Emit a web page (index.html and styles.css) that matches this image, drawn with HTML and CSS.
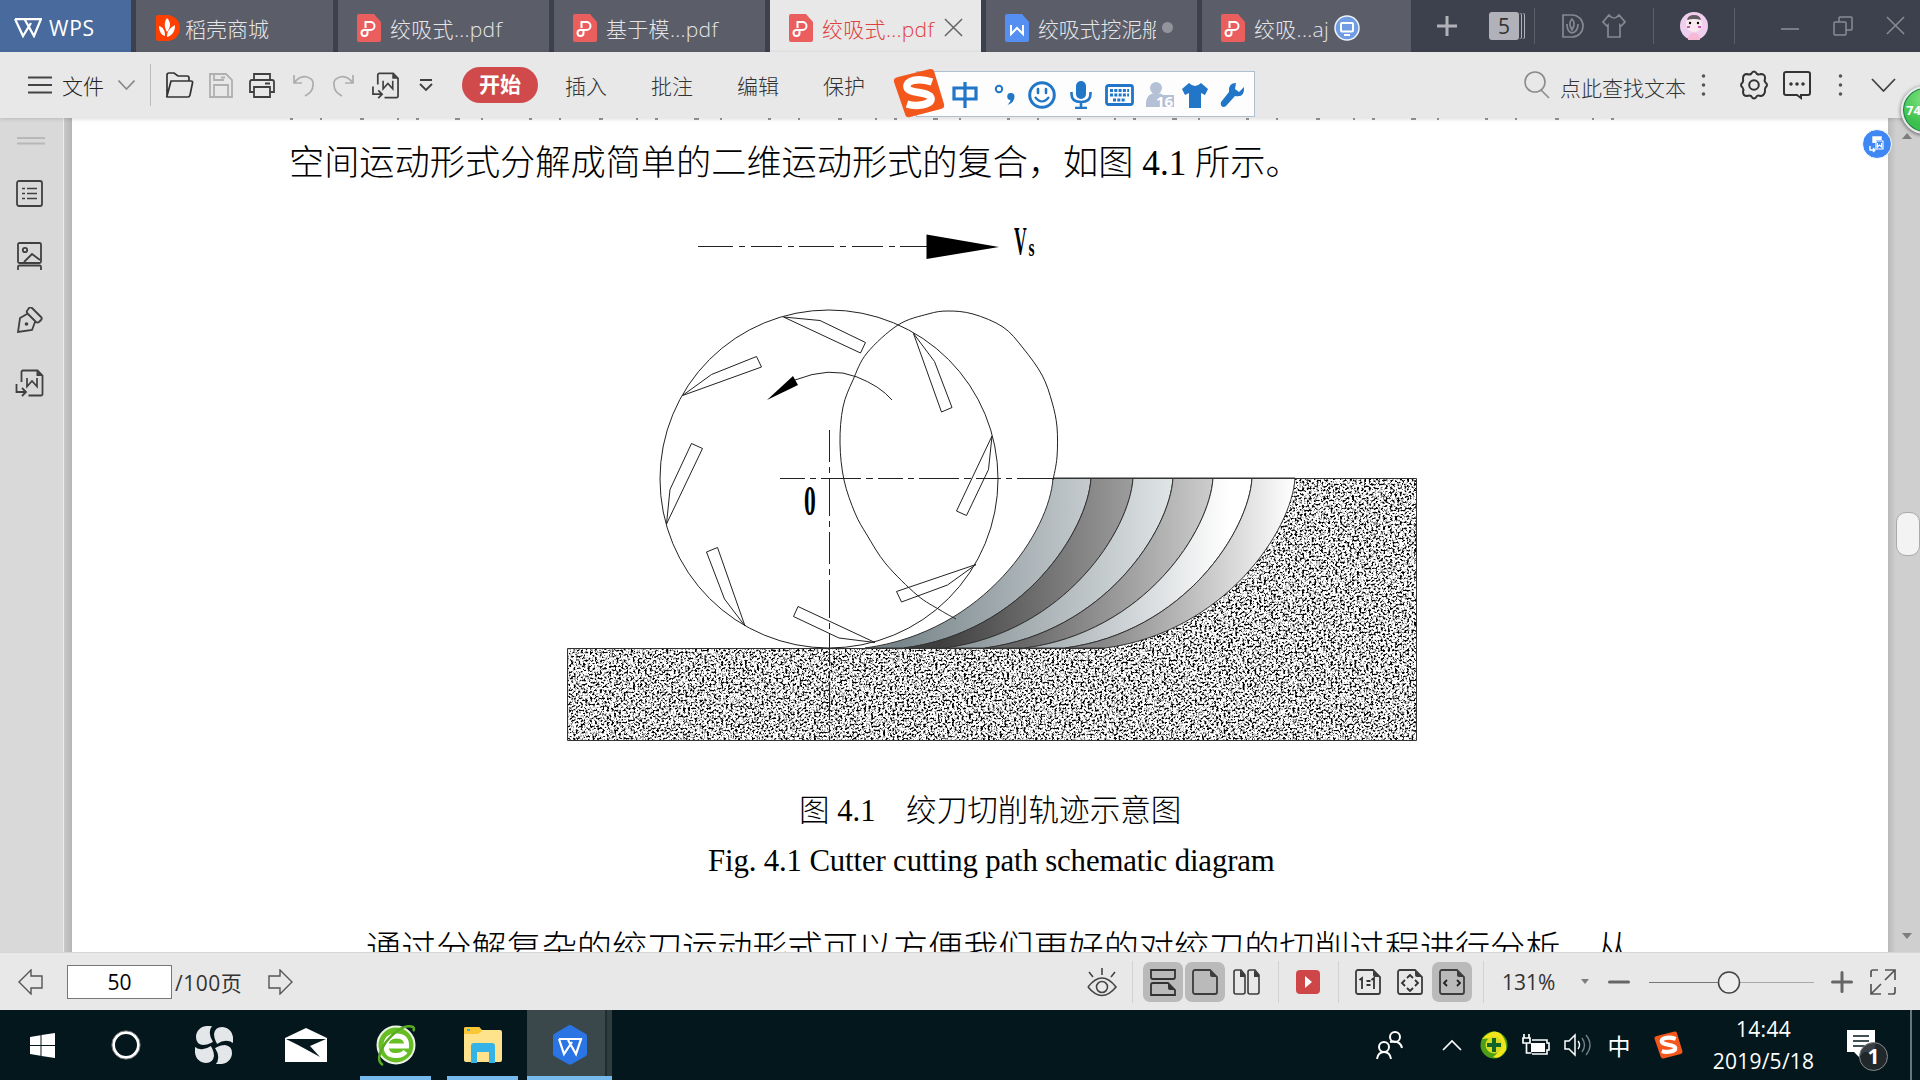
FILE: index.html
```html
<!DOCTYPE html>
<html lang="zh-CN">
<head>
    <meta charset="UTF-8">
    <meta name="viewport" content="width=device-width, initial-scale=1.0">
    <title>WPS - PDF</title>
    <link rel="stylesheet" href="styles.css">
</head>
<body>

    <!-- Shared icons -->
    <svg class="defs">
        <symbol id="i-pdf" viewBox="0 0 24 28">
            <path d="M2 0H17L24 8V26a2 2 0 0 1-2 2H2a2 2 0 0 1-2-2V2a2 2 0 0 1 2-2z" fill="#eb5e5e"/>
            <path d="M8.500 14V8h5a4 4 0 0 1 0 8H7.500a3 3 0 1 0 3 3v-3" fill="none" stroke="#fff" stroke-width="2"/>
        </symbol>
        <symbol id="i-convert" viewBox="0 0 28 28">
            <path d="M6 13V3a1.500 1.500 0 0 1 1.500-1.500H22l5 5V25a1.500 1.500 0 0 1-1.500 1.500H13M1 15v8h9M6.500 19l4 4-4 4" fill="none" stroke="#404040" stroke-width="1.800"/>
            <path d="M21 1l6 6h-6z" fill="#404040"/>
            <path d="M11.500 9v8.500l5-5.500 5 5.500V9" fill="none" stroke="#404040" stroke-width="1.700"/>
        </symbol>
        <symbol id="i-sogou" viewBox="0 0 52 50">
            <path d="M5 9L37 1q3-.5 4 2l10 33q1 4-3 5L17 49q-4 1-5-3L1 14q-1-4 4-5z" fill="#f4571b"/>
            <path d="M39 14C24 9 13 13 14 19c1 7 22 4 24 11 1 7-15 9-24 6" fill="none" stroke="#fff" stroke-width="7.500"/>
        </symbol>
        <symbol id="i-close" viewBox="0 0 20 20">
            <path d="M1 1L19 19M19 1L1 19" fill="none" stroke="currentColor" stroke-width="1.600"/>
        </symbol>
        <symbol id="i-page" viewBox="0 0 28 28">
            <path d="M4 2H19L26 9V24a2 2 0 0 1-2 2H4a2 2 0 0 1-2-2V4a2 2 0 0 1 2-2z" fill="none" stroke="#3c3c3c" stroke-width="1.800"/>
            <path d="M19 2l7 7h-5a2 2 0 0 1-2-2z" fill="#3c3c3c"/>
        </symbol>
    </svg>

    <!-- Title bar -->
    <header class="titlebar">
        <div class="tab home">
            <svg width="28" height="20" viewBox="0 0 28 20"><path d="M1 1h26L20 18 11 2M1 1l8 17L17 5" fill="none" stroke="#fff" stroke-width="2.300"/></svg>
            <span>WPS</span>
        </div>
        <div class="tab store">
            <svg width="24" height="26" viewBox="0 0 24 26"><path d="M2 0h9a13 13 0 0 1 0 26H2a2 2 0 0 1-2-2V2a2 2 0 0 1 2-2z" fill="#ff4000"/><path d="M11 3c4 4 4 9 0 14-3-5-3-10 0-14zM3 11c4 1 6 4 6 10-4-1-6-5-6-10zM19 10c0 6-2 10-8 12 0-6 3-9 8-12z" fill="#fff"/></svg>
            <span>稻壳商城</span>
        </div>
        <div class="tab"><svg width="24" height="28"><use href="#i-pdf"/></svg><span>绞吸式...pdf</span></div>
        <div class="tab"><svg width="24" height="28"><use href="#i-pdf"/></svg><span>基于模...pdf</span></div>
        <div class="tab active">
            <svg width="24" height="28"><use href="#i-pdf"/></svg><span>绞吸式...pdf</span>
            <svg class="tab-close" width="19" height="19"><use href="#i-close"/></svg>
        </div>
        <div class="tab">
            <svg width="24" height="28" viewBox="0 0 24 28"><path d="M2 0H17L24 8V26a2 2 0 0 1-2 2H2a2 2 0 0 1-2-2V2a2 2 0 0 1 2-2z" fill="#558ff2"/><path d="M6 11v9l6-6 6 6v-9" fill="none" stroke="#fff" stroke-width="2"/></svg>
            <span class="cut">绞吸式挖泥船</span>
            <i class="unsaved"></i>
        </div>
        <div class="tab last">
            <svg width="24" height="28"><use href="#i-pdf"/></svg><span>绞吸...aj</span>
            <svg class="cast" width="26" height="26" viewBox="0 0 26 26"><circle cx="13" cy="13" r="12" fill="#6f9ce2" stroke="#f0f4fa" stroke-width="1.500"/><rect x="7" y="8" width="12" height="8.500" rx="1" fill="none" stroke="#fff" stroke-width="2"/><path d="M10 20h6" stroke="#fff" stroke-width="2"/></svg>
        </div>
        <svg class="plus" width="22" height="22" viewBox="0 0 22 22"><path d="M11 1v20M1 11h20" stroke="#b1b2b9" stroke-width="3"/></svg>
        <div class="count">5</div>
        <i class="vline first"></i>
        <svg class="doker" width="22" height="24" viewBox="0 0 22 24"><g fill="none" stroke="#868890" stroke-width="1.700"><path d="M1 1h9a11 11 0 0 1 0 22H1z"/><path d="M10 5c3 3 3 6 0 11-3-5-3-8 0-11zM5 10c0 5 1 8 5 9M16 10c0 5-2 8-6 9"/></g></svg>
        <svg class="skin" width="24" height="24" viewBox="0 0 24 24"><path d="M7 1q5 6 10 0l6 7-4 4-1-1v12H6V11l-1 1-4-4z" fill="none" stroke="#868890" stroke-width="1.700"/></svg>
        <i class="vline second"></i>
        <svg class="avatar" width="30" height="30" viewBox="0 0 30 30"><circle cx="15" cy="15" r="14" fill="#f0cfee"/><path d="M9 29q0-7 6-7t6 7z" fill="#f7b8d4"/><circle cx="15" cy="13" r="8" fill="#faeaf0"/><path d="M8 9q1-5 7-5t7 5q-7-2-14 0z" fill="#625b62"/><circle cx="11" cy="12" r="1.200"/><circle cx="19" cy="12" r="1.200"/><path d="M8 16h3M19 16h3" stroke="#d05bb0" stroke-width="2"/></svg>
        <i class="vline third"></i>
        <div class="window-buttons">
            <svg width="20" height="20" viewBox="0 0 20 20"><path d="M1 13h18" stroke="#8a8c94" stroke-width="1.600"/></svg>
            <svg width="20" height="20" viewBox="0 0 20 20"><path d="M1 7q0-1 1-1h10q1 0 1 1v11q0 1-1 1H2q-1 0-1-1zM6 6V2q0-1 1-1h11q1 0 1 1v11q0 1-1 1h-5" fill="none" stroke="#8a8c94" stroke-width="1.500"/></svg>
            <svg width="19" height="19"><use href="#i-close"/></svg>
        </div>
    </header>

    <!-- Ribbon -->
    <div class="toolbar">
        <svg class="burger" width="24" height="18" viewBox="0 0 24 18"><path d="M0 1.500h24M0 9h24M0 16.500h24" stroke="#444" stroke-width="1.800"/></svg>
        <span class="file">文件</span>
        <svg class="file-chevron" width="17" height="10" viewBox="0 0 17 10"><path d="M.5.5l8 8.500 8-8.500" fill="none" stroke="#888" stroke-width="1.600"/></svg>
        <i class="tool-line"></i>
        <div class="quick">
            <svg width="29" height="26" viewBox="0 0 29 26"><path d="M2 24V3q0-2 2-2h5l4 3h9q2 0 2 2v3M2 24L6 9h20q2 0 1.500 2L25 23q-.5 2-2 2H3q-2 0-1-1z" fill="none" stroke="#333" stroke-width="1.700"/></svg>
            <svg width="24" height="25" viewBox="0 0 24 25"><path d="M1 1h16l6 6v17H1zM5 24V12h14v12M5 1v6h10M12 4.500h4" fill="none" stroke="#b0b0b0" stroke-width="1.800"/></svg>
            <svg width="26" height="25" viewBox="0 0 26 25"><path d="M5 7V1h16v6M5 19H1V9q0-2 2-2h20q2 0 2 2v10h-4M5 14h16v10H5zM16 10.500h5" fill="none" stroke="#404040" stroke-width="1.800"/></svg>
            <svg width="22" height="24" viewBox="0 0 22 24"><path d="M2 2v8h8M2 10Q8 2 15 4t6 8q0 7-8 11" fill="none" stroke="#adadad" stroke-width="1.700"/></svg>
            <svg width="22" height="24" viewBox="0 0 22 24"><path d="M20 2v8h-8M20 10Q14 2 7 4t-6 8q0 7 8 11" fill="none" stroke="#adadad" stroke-width="1.700"/></svg>
            <svg width="27" height="27"><use href="#i-convert"/></svg>
            <svg width="14" height="13" viewBox="0 0 14 13"><path d="M1 1h12M1 5l6 6 6-6" fill="none" stroke="#404040" stroke-width="1.800"/></svg>
        </div>
        <div class="menu">
            <b>开始</b><span>插入</span><span>批注</span><span>编辑</span><span>保护</span>
        </div>
        <div class="tool-right">
            <svg width="28" height="28" viewBox="0 0 28 28"><circle cx="12" cy="11" r="10" fill="none" stroke="#8b8b8b" stroke-width="1.600"/><path d="M18 19l8 8" stroke="#8b8b8b" stroke-width="1.600"/></svg>
            <span class="find">点此查找文本</span>
            <svg class="dots" width="5" height="24" viewBox="0 0 5 24"><path d="M2.500 3v.01M2.500 12v.01M2.500 21v.01" stroke="#555" stroke-width="3.600" stroke-linecap="round"/></svg>
            <svg class="gear" width="30" height="30" viewBox="0 0 30 30"><path d="M12 4q3-5 6 0 2 1 3.500 0 5 0 4.500 4.500-1 2 .5 4 3 2.500 0 5-1 2-.5 4Q25 26 21.500 26q-2-1-3.500 0-3 5-6 0-2-1-4 0-4 0-4-4.500 1-2-.5-4-3-2.500 0-5 1-2 .5-4Q4 4 8 4q2 1 4 0z" fill="none" stroke="#333" stroke-width="2"/><circle cx="15" cy="15" r="4.800" fill="none" stroke="#333" stroke-width="2"/></svg>
            <svg class="chat" width="28" height="29" viewBox="0 0 28 29"><path d="M3 1h22q2 0 2 2v19q0 2-2 2h-7v3l-4-3H3q-2 0-2-2V3q0-2 2-2z" fill="none" stroke="#333" stroke-width="2"/><path d="M8 13v.01M14 13v.01M20 13v.01" stroke="#333" stroke-width="3.500" stroke-linecap="round"/></svg>
            <svg class="dots more" width="5" height="24" viewBox="0 0 5 24"><path d="M2.500 3v.01M2.500 12v.01M2.500 21v.01" stroke="#555" stroke-width="3.600" stroke-linecap="round"/></svg>
            <svg class="collapse" width="25" height="14" viewBox="0 0 25 14"><path d="M1 1l11.500 12L24 1" fill="none" stroke="#444" stroke-width="1.800"/></svg>
        </div>
    </div>

    <!-- Document -->
    <main class="workspace">
        <aside class="sidebar">
            <svg class="grip" width="28" height="8" viewBox="0 0 28 8"><path d="M0 1h28M0 6.500h28" stroke="#b8b8b8" stroke-width="1.800"/></svg>
            <div><svg width="27" height="27" viewBox="0 0 27 27"><rect x="1" y="1" width="25" height="25" rx="2" fill="none" stroke="#404040" stroke-width="1.800"/><path d="M6 8.500h3M11 8.500h10M6 13.500h3M11 13.500h10M6 18.500h3M11 18.500h10" stroke="#404040" stroke-width="1.600"/></svg></div>
            <div><svg width="25" height="29" viewBox="0 0 25 29"><rect x="1" y="1" width="23" height="20" rx="1.500" fill="none" stroke="#404040" stroke-width="1.800"/><path d="M7 20l8-8 8 6M1 28v-3q0-1.500 1.500-1.500h20q1.500 0 1.500 1.500v3" fill="none" stroke="#404040" stroke-width="1.800"/><circle cx="8" cy="8" r="2.200" fill="none" stroke="#404040" stroke-width="1.800"/></svg></div>
            <div><svg width="26" height="26" viewBox="0 0 26 26"><path d="M10 7L3 11 1 25 15 23l3-8M12 1q1.500-1.500 3 0l9 9q1.500 1.500 0 3l-2 2q-1.500 1-3 0l-8-8q-2-2-1-3z" fill="none" stroke="#404040" stroke-width="1.800"/><circle cx="9.500" cy="17" r="1.800" fill="#404040"/></svg></div>
            <div><svg width="29" height="28"><use href="#i-convert"/></svg></div>
        </aside>
        <article class="page">
            <svg class="prev-line" width="1340" height="2" viewBox="0 0 1340 2"><path d="M0 1h1338" stroke="#777" stroke-width="1.500" stroke-dasharray="3 27 2 38 4 33 2 17 3 36 5 21 2 46"/></svg>
            <p class="line">空间运动形式分解成简单的二维运动形式的复合，如图 4.1 所示。</p>
            <svg class="figure" width="870" height="540" viewBox="560 210 870 540">
                <defs>
                    <filter id="grain" x="0" y="0" width="100%" height="100%" color-interpolation-filters="sRGB">
                        <feTurbulence type="fractalNoise" baseFrequency=".42 .5" numOctaves="2" seed="4"/>
                        <feColorMatrix values="5 0 0 0 -1.650 5 0 0 0 -1.650 5 0 0 0 -1.650 0 0 0 0 1"/>
                    </filter>
                    <clipPath id="soil"><path d="M567 648H1105C1225 632 1292 530 1295 478H1416V740H567z"/></clipPath>
                    <linearGradient id="b1"><stop offset=".15" stop-color="#78868b"/><stop offset="1" stop-color="#c5cbce"/></linearGradient>
                    <linearGradient id="b2"><stop offset=".15" stop-color="#3e3e3e"/><stop offset="1" stop-color="#9d9d9d"/></linearGradient>
                    <linearGradient id="b3"><stop offset=".15" stop-color="#929ca0"/><stop offset="1" stop-color="#e0e5e6"/></linearGradient>
                    <linearGradient id="b4"><stop offset=".15" stop-color="#666"/><stop offset="1" stop-color="#cdcdcd"/></linearGradient>
                    <linearGradient id="b5"><stop offset=".15" stop-color="#aeb6ba"/><stop offset=".9" stop-color="#fff"/></linearGradient>
                    <linearGradient id="b6"><stop offset=".15" stop-color="#858585"/><stop offset="1" stop-color="#fff"/></linearGradient>
                </defs>
                <g clip-path="url(#soil)"><rect x="567" y="478" width="850" height="263" filter="url(#grain)"/></g>
                <g stroke="#333" stroke-width="1">
                    <path fill="url(#b1)" d="M1053 478c-3 52-68 154-188 170H904c120-16 184-118 187-170z"/>
                    <path fill="url(#b2)" d="M1091 478c-3 52-67 154-187 170H945c120-16 185-118 188-170z"/>
                    <path fill="url(#b3)" d="M1133 478c-3 52-68 154-188 170H985c120-16 185-118 188-170z"/>
                    <path fill="url(#b4)" d="M1173 478c-3 52-68 154-188 170H1025c120-16 185-118 188-170z"/>
                    <path fill="url(#b5)" d="M1213 478c-3 52-68 154-188 170H1065c120-16 184-118 187-170z"/>
                    <path fill="url(#b6)" d="M1252 478c-3 52-67 154-187 170H1105c120-16 187-118 190-170z"/>
                    <path fill="none" d="M567.500 648.500H1105M1053 478.500H1416.500V740.500H567.500V648.500"/>
                </g>
                <g fill="none" stroke="#222" stroke-width="1">
                    <circle cx="829" cy="479" r="169"/>
                    <path id="trochoid"/>
                    <path d="M698 246.500H930" stroke-dasharray="35 6 6 6 31 6 6 5"/>
                    <path d="M780 478.500H1053" stroke-dasharray="25 5 6 5 40 5 7 5"/>
                    <path d="M829.500 430V740" stroke-dasharray="32 5 6 5 38 5 6 5"/>
                    <path d="M795 380Q830 366 857 377Q880 386 892 400"/>
                </g>
                <g id="cutters" fill="none" stroke="#222" stroke-width="1"></g>
                <path d="M926.500 234.500V259L999 247z"/>
                <path d="M767 400l26-24 5 9z"/>
                <text class="fig-v" transform="translate(1014 254) scale(.44 1)">V</text>
                <text class="fig-s" transform="translate(1028.500 255.500) scale(.62 1)">s</text>
                <text class="fig-o" transform="translate(804 514.500) scale(.56 1)">0</text>
            </svg>
            <p class="caption">图 4.1　绞刀切削轨迹示意图</p>
            <p class="caption-en">Fig. 4.1 Cutter cutting path schematic diagram</p>
            <p class="line next">通过分解复杂的绞刀运动形式可以方便我们更好的对绞刀的切削过程进行分析，从</p>
        </article>
        <div class="scroll">
            <i class="arrow up"></i><i class="thumb"></i><i class="arrow down"></i>
        </div>
        <svg class="float-convert" width="30" height="30" viewBox="0 0 30 30"><circle cx="15" cy="15" r="14.500" fill="#3f87f2" stroke="#fff"/><path d="M11 14V8h8v3M8 17v4h4M11 19l2 2-2 2" fill="none" stroke="#fff" stroke-width="1.400"/><path d="M11 8h8v3h-5v3h-3z" fill="#fff"/><path d="M14 12h7v8h-7zM15.500 14v4l2-2 2 2v-4" fill="none" stroke="#fff" stroke-width="1.100"/></svg>
    </main>

    <!-- Status bar -->
    <footer class="status">
        <svg class="prev" width="25" height="26" viewBox="0 0 25 26"><path d="M1 13L13 1v6h11v12H13v6z" fill="none" stroke="#555" stroke-width="1.400"/></svg>
        <div class="page-box">50</div>
        <span class="total">/100页</span>
        <svg width="25" height="26" viewBox="0 0 25 26"><path d="M24 13L12 1v6H1v12h11v6z" fill="none" stroke="#555" stroke-width="1.400"/></svg>
        <div class="view-tools">
            <svg class="eye" width="30" height="30" viewBox="0 0 30 30"><path d="M1 20q14-18 28 0-14 17-28 0M2 5l4 5M15 1v7M28 5l-4 5" fill="none" stroke="#444" stroke-width="1.600"/><circle cx="15" cy="20" r="5.500" fill="none" stroke="#444" stroke-width="1.600"/></svg>
            <i class="sep s1"></i>
            <span class="tool on"><svg width="28" height="28" viewBox="0 0 28 28"><path d="M2 2h24v7q0 2-2 2H4q-2 0-2-2zM2 27V17q0-2 2-2h15l7 7v5z" fill="none" stroke="#333" stroke-width="1.800"/><path d="M19 15l7 7h-5q-2 0-2-2z" fill="#333"/></svg></span>
            <span class="tool on"><svg width="28" height="28"><use href="#i-page"/></svg></span>
            <span class="tool"><svg width="28" height="28" viewBox="0 0 28 28"><path d="M3 2h5l4 5v17q0 2-2 2H3q-2 0-2-2V4q0-2 2-2zM17 2h5l4 5v17q0 2-2 2h-7q-2 0-2-2V4q0-2 2-2z" fill="none" stroke="#3c3c3c" stroke-width="1.600"/><path d="M7 2l5 5v2H7zM21 2l5 5v2h-5z" fill="#3c3c3c"/></svg></span>
            <i class="sep s2"></i>
            <svg width="24" height="24" viewBox="0 0 24 24"><rect width="24" height="24" rx="4" fill="#cf4648"/><path d="M9 6l7 6-7 6z" fill="#fff"/></svg>
            <i class="sep s3"></i>
            <span class="tool"><svg width="28" height="28" viewBox="0 0 28 28"><use href="#i-page"/><path d="M5.500 12l2.500-2v11M17.500 12l2.500-2v11M12.500 13h4M12.500 17h4" fill="none" stroke="#333" stroke-width="1.800"/></svg></span>
            <span class="tool"><svg width="28" height="28" viewBox="0 0 28 28"><use href="#i-page"/><path d="M11 10l3-3 3 3M11 20l3 3 3-3M9 12l-3 3 3 3M19 12l3 3-3 3" fill="none" stroke="#333" stroke-width="1.800"/></svg></span>
            <span class="tool on"><svg width="28" height="28" viewBox="0 0 28 28"><use href="#i-page"/><path d="M9 12l-3 3 3 3M19 12l3 3-3 3" fill="none" stroke="#222" stroke-width="1.800"/></svg></span>
            <i class="sep s4"></i>
            <span class="percent">131%</span>
            <i class="arrow down small"></i>
            <svg class="minus" width="22" height="22" viewBox="0 0 22 22"><path d="M1.500 11h19" stroke="#666" stroke-width="3" stroke-linecap="round"/></svg>
            <svg class="slider" width="166" height="24" viewBox="0 0 166 24"><path d="M0 12.500h80" stroke="#777" stroke-width="1.200"/><path d="M80 12.500h85" stroke="#aaa" stroke-width="1.200"/><circle cx="80" cy="12.500" r="10.500" fill="#eee" stroke="#444" stroke-width="1.500"/></svg>
            <svg class="zoom-in" width="22" height="22" viewBox="0 0 22 22"><path d="M1.500 11h19M11 1.500v19" stroke="#666" stroke-width="3" stroke-linecap="round"/></svg>
            <svg width="26" height="26" viewBox="0 0 26 26"><path d="M1 8V3q0-2 2-2h5M15 1h10v10M25 1L15 11M1 15v10h10M1 25l10-10M25 18v5q0 2-2 2h-5" fill="none" stroke="#555" stroke-width="1.700"/></svg>
        </div>
    </footer>

    <!-- Taskbar -->
    <div class="taskbar">
        <div class="app start"><svg width="25" height="25" viewBox="0 0 25 25"><path d="M0 4l10.500-1.700V12H0zM11.500 2.100L25 0v12H11.500zM0 13h10.500v9.700L0 21zM11.500 13H25v12l-13.500-2.100z" fill="#fff"/></svg></div>
        <div class="app"><svg width="30" height="30" viewBox="0 0 30 30"><circle cx="15" cy="15" r="12.500" fill="none" stroke="#fff" stroke-width="3"/><circle cx="15" cy="15" r="14.200" fill="none" stroke="#777" stroke-width="1"/></svg></div>
        <div class="app"><svg width="38" height="38" viewBox="0 0 38 38"><path id="petal" d="M15 0C6-1 1 5 1 11q0 7 7 8 4 0 8-2 1-1 2-1-4-6-3-11 0-3 2-4.500Q17 0 15 0z" fill="#e4e7ea"/><use href="#petal" transform="rotate(90 19 19)"/><use href="#petal" transform="rotate(180 19 19)"/><use href="#petal" transform="rotate(270 19 19)"/></svg></div>
        <div class="app mail"><svg width="42" height="34" viewBox="0 0 42 34"><path d="M0 10L21 0l21 10v24H0z" fill="#fff"/><path d="M1 11h40L25 18l10 11L13 17z" fill="#05181d"/></svg></div>
        <div class="app open"><svg width="40" height="42" viewBox="0 0 40 42"><circle cx="20" cy="21" r="18.500" fill="#66bd24" stroke="#eef5e8" stroke-width="2"/><path d="M11 22h19.500Q31 12 20.500 12T10 22t10.500 9.500q6 0 9-4" fill="none" stroke="#fff" stroke-width="5"/><path d="M7 41Q-2 36 10 18 26-1 37 3q2 2 0 4" fill="none" stroke="#59ac1f" stroke-width="2.500"/></svg></div>
        <div class="app open"><svg width="38" height="38" viewBox="0 0 38 38"><path d="M0 3q0-2 2-2h13l3 3h18q2 0 2 2v28q0 2-2 2H2q-2 0-2-2z" fill="#ffe28c"/><path d="M0 3q0-2 2-2h13l3 4-4 3H0z" fill="#fcc735"/><path d="M3 4h3" stroke="#35b2e6" stroke-width="2"/><path d="M7 37V20q0-3 3-3h18q3 0 3 3v17h-6v-11H13v11z" fill="#35b2e6"/></svg></div>
        <div class="app wps"><svg width="36" height="40" viewBox="0 0 36 40"><path d="M18 0q1 0 2 .8L34 9q1 1 1 2v18q0 1-1 2L20 39q-2 1-4 0L2 31q-1-1-1-2V11q0-1 1-2L16 .8Q17 0 18 0z" fill="#2b74e4"/><path d="M7 14h22l-5 15-8-14M7 14l5 15 8-12" fill="none" stroke="#fff" stroke-width="2.200"/></svg></div>
        <div class="tray">
            <svg width="27" height="28" viewBox="0 0 27 28"><g fill="none" stroke="#fff" stroke-width="2"><circle cx="19" cy="6" r="5"/><circle cx="8" cy="16" r="5"/><path d="M1 28q1-7 7-7t7 7M14 11q10-2 12 6"/></g></svg>
            <svg class="up-chevron" width="20" height="12" viewBox="0 0 20 12"><path d="M1 11l9-9 9 9" fill="none" stroke="#fff" stroke-width="1.600"/></svg>
            <svg class="guard" width="28" height="28" viewBox="0 0 28 28"><circle cx="14" cy="14" r="13.500" fill="#4b9e16"/><path d="M2 8Q13-4 21 3q6 7 5 16-6 10-13 7 9-6 4-13T2 8z" fill="#f4e51b"/><circle cx="14" cy="14" r="8.500" fill="#d8dc20"/><path d="M14 7v14M7 14h14" stroke="#11642a" stroke-width="4"/></svg>
            <svg class="battery" width="29" height="22" viewBox="0 0 29 22"><path d="M10 6h15v3h2v7h-2v4H10" fill="none" stroke="#fff" stroke-width="1.600"/><path d="M9 9h14v9H9z" fill="#fff"/><path d="M2 0v4M7 0v4M1 4h7v5H1zM4.500 9v10h5" fill="none" stroke="#fff" stroke-width="1.700"/></svg>
            <svg class="volume" width="28" height="24" viewBox="0 0 28 24"><path d="M1 8h4l6-6v20l-6-6H1z" fill="none" stroke="#fff" stroke-width="1.500"/><path d="M14 8q3 4 0 8" fill="none" stroke="#fff" stroke-width="1.400"/><path d="M18 5q5 7 0 14M22 2q8 10 0 20" fill="none" stroke="#748087" stroke-width="1.400"/></svg>
            <span class="ime">中</span>
            <svg class="sogou-small" width="29" height="28"><use href="#i-sogou"/></svg>
            <div class="clock">14:44<br>2019/5/18</div>
            <div class="notice">
                <svg width="28" height="28" viewBox="0 0 28 28"><path d="M0 0h28v22H17l-5 5-5-5H0z" fill="#fff"/><path d="M6 6h16M6 11h16M6 16h12" stroke="#05181d" stroke-width="1.600"/></svg>
                <b>1</b>
            </div>
            <i class="peek"></i>
        </div>
    </div>

    <!-- Floating input method bar -->
    <div class="ime-bar">
        <svg class="logo" width="52" height="50"><use href="#i-sogou"/></svg>
        <svg width="26" height="26" viewBox="0 0 26 26"><path d="M2 6h22v11H2zM13 0v26" fill="none" stroke="#2176c7" stroke-width="3.200"/></svg>
        <svg class="punct" width="22" height="22" viewBox="0 0 22 22"><circle cx="5" cy="5" r="3.200" fill="none" stroke="#2176c7" stroke-width="2"/><path d="M17 9a3.500 3.500 0 0 1 3.500 3.500q0 6-7 8.500 3-3 3-5a3.500 3.500 0 0 1 .5-7z" fill="#2176c7"/></svg>
        <svg class="smile" width="30" height="28" viewBox="0 0 30 28"><circle cx="15" cy="14" r="12.300" fill="none" stroke="#2176c7" stroke-width="3"/><path d="M11 8v4M19 8v4" stroke="#2176c7" stroke-width="2.600" stroke-linecap="round"/><path d="M8 16q7 9 14 0" fill="none" stroke="#2176c7" stroke-width="2.200"/></svg>
        <svg class="mic" width="22" height="28" viewBox="0 0 22 28"><rect x="6" width="10" height="18" rx="5" fill="#2176c7"/><path d="M1.500 11v2q0 8 9.500 8t9.500-8v-2M11 21v6M5 27h12" fill="none" stroke="#2176c7" stroke-width="2.600"/></svg>
        <svg class="keys" width="29" height="22" viewBox="0 0 29 22"><rect x="1.500" y="1.500" width="26" height="19" rx="2" fill="none" stroke="#2176c7" stroke-width="2.800"/><path d="M5 6.500h19M5 11h19M8 16h13" stroke="#2176c7" stroke-width="3" stroke-dasharray="3 1.300"/></svg>
        <svg class="user" width="30" height="26" viewBox="0 0 30 26"><circle cx="11" cy="6" r="6" fill="#b3c0d6"/><path d="M1 25q-1-14 10-14 5 0 7 2h11v12z" fill="#b3c0d6"/><text class="lv" x="11" y="25">16</text></svg>
        <svg class="shirt" width="26" height="25" viewBox="0 0 26 25"><path d="M7 0q6 6 12 0l7 6-3 6-4-2v15H7V10l-4 2-3-6z" fill="#2176c7"/></svg>
        <svg class="wrench" width="26" height="26" viewBox="0 0 26 26"><path d="M24 5l-5 5-4-3 1-6q-8 0-7 9L1 20q-1 4 2 5 2 0 3-1l9-10q10 2 9-9z" fill="#2176c7"/></svg>
    </div>
    <div class="ball"><span>74</span></div>

    <script>
        // Blade outlines: tip, bend, two outer corners
        const cutters = [
            [[783.500, 317], [820, 320.500], [865.500, 342.500], [860.500, 353]],
            [[682.500, 395.500], [711.500, 374.500], [756.500, 356.500], [761.500, 367]],
            [[666.500, 524], [670, 489.500], [691.500, 443.500], [702.500, 448.500]],
            [[745, 626], [724.500, 599], [706.500, 552], [717.500, 547.500]],
            [[875, 642.500], [839, 638], [793.500, 616.500], [798, 606.500]],
            [[976, 564.500], [947.500, 585], [901.500, 602], [896.500, 591.500]],
            [[992, 436], [988.500, 469.500], [966.500, 515.500], [956.500, 511]],
            [[913.500, 333.500], [934.500, 361.500], [952, 407.500], [941.500, 412]]
        ];
        const group = document.getElementById("cutters");
        cutters.forEach(points => {
            const blade = document.createElementNS("http://www.w3.org/2000/svg", "polygon");
            blade.setAttribute("points", points.map(p => p.join(",")).join(" "));
            group.appendChild(blade);
        });

        // Path of one blade tip while the cutter swings
        const tip = [[956, 619], [940, 610], [917, 595], [886, 564], [867, 535], [855, 513], [844, 480], [840, 443], [843, 407], [853, 380], [867, 353], [898, 325], [928, 314], [948, 311], [973, 314], [1003, 327], [1023, 348], [1042, 375], [1052, 402], [1057, 427], [1057, 457], [1053, 480]];
        let d = "M" + tip[0];
        for (let i = 0; i < tip.length - 1; i++) {
            const a = tip[i - 1] || tip[i], b = tip[i], c = tip[i + 1], e = tip[i + 2] || c;
            d += "C" + [b[0] + (c[0] - a[0]) / 6, b[1] + (c[1] - a[1]) / 6, c[0] - (e[0] - b[0]) / 6, c[1] - (e[1] - b[1]) / 6, c[0], c[1]];
        }
        document.getElementById("trochoid").setAttribute("d", d);
    </script>

</body>
</html>
```
FILE: styles.css
```css
* {
    box-sizing: border-box;
}

body {
    margin: 0;
    width: 1920px;
    height: 1080px;
    overflow: hidden;
    position: relative;
    display: flex;
    flex-direction: column;
    font-family: "Open Sans", "Noto Sans CJK SC", sans-serif;
    font-size: 21px;
    font-weight: 300;
    color: #333;
}

svg {
    display: block;
    flex: none;
}

.defs {
    position: absolute;
    width: 0;
    height: 0;
}

/* Title bar */
.titlebar {
    height: 52px;
    flex: none;
    display: flex;
    align-items: center;
    background: #3d414d;
}

.tab {
    width: 211px;
    height: 52px;
    flex: none;
    margin-right: 5px;
    padding: 3px 0 0 19px;
    display: flex;
    align-items: center;
    background: #5b5d68;
    color: #e6e6e9;
    white-space: nowrap;
}

.tab span {
    margin-left: 9px;
    letter-spacing: 0.3px;
}

.tab.home {
    width: 131px;
    padding-left: 14px;
    background: #486a9c;
    color: #fff;
}

.tab.home span {
    margin-left: 7px;
    font-weight: 400;
    letter-spacing: 0.8px;
}

.tab.store {
    width: 197px;
    padding-left: 20px;
}

.tab.store span {
    margin-left: 5px;
    letter-spacing: 0;
}

.tab.active {
    background: #e8e8e8;
    color: #e04040;
}

.tab.last {
    width: 209px;
}

.tab-close {
    margin-left: auto;
    margin-right: 18px;
    color: #666;
}

.tab .cut {
    width: 118px;
    overflow: hidden;
    letter-spacing: -0.2px;
}

.unsaved {
    width: 11px;
    height: 11px;
    margin-left: 6px;
    border-radius: 50%;
    background: #92939b;
}

.cast {
    margin-left: auto;
    margin-right: 51px;
}

.plus {
    margin-left: 20px;
}

.count {
    width: 30px;
    height: 28px;
    margin-left: 31px;
    border-radius: 3px;
    background: #b1b2b9;
    box-shadow: 3px 0 0 -1px #3d414d, 4px 0 0 -1px #b1b2b9, 6px 0 0 -1px #3d414d, 7px 0 0 -1px #b1b2b9;
    color: #333;
    line-height: 28px;
    text-align: center;
    font-weight: 400;
}

.vline {
    width: 1px;
    height: 36px;
    background: #5c5f69;
}

.vline.first {
    margin-left: 15px;
}

.doker {
    margin-left: 27px;
}

.skin {
    margin-left: 18px;
}

.vline.second {
    margin-left: 27px;
}

.avatar {
    margin-left: 25px;
}

.vline.third {
    margin-left: 25px;
}

.window-buttons {
    flex: 1;
    display: flex;
    justify-content: space-between;
    padding: 0 15px 0 45px;
    color: #8a8c94;
}

/* Ribbon */
.toolbar {
    height: 66px;
    flex: none;
    display: flex;
    align-items: center;
    background: #e8e8e8;
    position: relative;
    z-index: 1;
    box-shadow: 0 1px 4px rgba(0, 0, 0, 0.15);
}

.burger {
    margin-left: 28px;
}

.file {
    margin-left: 10px;
    color: #222;
}

.file-chevron {
    margin-left: 14px;
}

.tool-line {
    width: 1px;
    height: 42px;
    margin: 0 8px 0 15px;
    background: #bbb;
}

.quick {
    width: 288px;
    display: grid;
    grid-template-columns: repeat(7, 1fr);
    justify-items: center;
    align-items: center;
}

.menu {
    display: flex;
    align-items: center;
    margin-left: 15px;
}

.menu b {
    width: 76px;
    height: 36px;
    margin-right: 5px;
    border-radius: 18px;
    background: #d14a4b;
    color: #fff;
    line-height: 35px;
    text-align: center;
    font-weight: 700;
}

.menu span {
    width: 86px;
    text-align: center;
}

.tool-right {
    display: flex;
    align-items: center;
    margin-left: auto;
    padding-right: 24px;
}

.find {
    margin-left: 9px;
    padding-top: 4px;
}

.dots {
    margin-left: 15px;
}

.gear {
    margin-left: 33px;
}

.chat {
    margin-left: 14px;
}

.dots.more {
    margin-left: 27px;
}

.collapse {
    margin-left: 28px;
}

/* Document area */
.workspace {
    height: 834px;
    flex: none;
    display: flex;
    position: relative;
    overflow: hidden;
}

.sidebar {
    width: 72px;
    flex: none;
    background: linear-gradient(to right, #d9d9d9 63px, #ececec 63px, #ececec 64px, #c9c9c9 64px, #b5b5b5 72px);
}

.sidebar div {
    width: 59px;
    height: 63px;
    display: flex;
    align-items: center;
    justify-content: center;
}

.grip {
    margin: 19px 0 17px 17px;
}

.page {
    width: 1816px;
    flex: none;
    overflow: hidden;
    background: #fff;
    color: #000;
    font-family: "Liberation Serif", "Noto Sans CJK SC", serif;
}

.page p {
    margin: 0;
    height: 50px;
    line-height: 50px;
    white-space: nowrap;
}

.prev-line {
    margin-left: 218px;
}

.page .line {
    margin: 19px 0 0 217px;
    font-size: 35.2px;
}

.figure {
    margin: 21px 0 0 488px;
}

.fig-v {
    font-size: 40px;
    font-weight: 700;
}

.fig-s {
    font-size: 25px;
    font-weight: 700;
}

.fig-o {
    font-size: 42px;
    font-weight: 700;
}

.page .caption {
    margin: 36px 0 0 727px;
    font-size: 30.6px;
}

.page .caption-en {
    margin: 0 0 0 636px;
    font-size: 30.8px;
    letter-spacing: -0.14px;
}

.page .line.next {
    margin: 39px 0 0 294px;
    letter-spacing: -0.06px;
}

.scroll {
    width: 32px;
    display: flex;
    flex-direction: column;
    align-items: flex-end;
    padding: 15px 0 13px;
    background: linear-gradient(to right, #b9b9b9, #cfcfcf 8px);
}

.arrow {
    border: 5px solid transparent;
    border-top: 0;
    border-bottom: 6px solid #7d7d7d;
    margin-right: 8px;
}

.arrow.down {
    border-top: 6px solid #7d7d7d;
    border-bottom: 0;
}

.thumb {
    width: 24px;
    height: 44px;
    margin: 373px 0 auto;
    border: 1px solid #aaa;
    border-radius: 10px;
    background: #f3f3f3;
}

.float-convert {
    position: absolute;
    left: 1862px;
    top: 11px;
}

/* Status bar */
.status {
    height: 58px;
    flex: none;
    display: flex;
    align-items: center;
    border-top: 1px solid #d6d6d6;
    background: #e8e8e8;
}

.prev {
    margin-left: 18px;
}

.page-box {
    width: 105px;
    height: 34px;
    margin: 0 0 0 24px;
    border: 1px solid #777;
    background: #fff;
    color: #000;
    line-height: 32px;
    text-align: center;
    font-weight: 400;
}

.total {
    width: 96px;
    padding-left: 3px;
    font-weight: 400;
    letter-spacing: 0.5px;
    white-space: nowrap;
}

.view-tools {
    display: flex;
    align-items: center;
    margin-left: auto;
    padding-right: 24px;
}

.sep {
    width: 1px;
    height: 42px;
    background: #d2d2d2;
}

.sep.s1 {
    margin: 0 10px 0 15px;
}

.sep.s2 {
    margin: 0 17px 0 9px;
}

.sep.s3 {
    margin: 0 9px 0 18px;
}

.sep.s4 {
    margin: 0 18px 0 9px;
}

.tool {
    width: 40px;
    height: 40px;
    margin-right: 2px;
    border-radius: 7px;
    display: flex;
    align-items: center;
    justify-content: center;
}

.tool.on {
    background: #bababa;
}

.percent {
    width: 79px;
    font-weight: 400;
}

.arrow.small {
    border-width: 5px 4px 0;
    margin: 0 19px 0 0;
}

.slider {
    margin: 0 16px 0 19px;
}

.zoom-in {
    margin-right: 17px;
}

/* Taskbar */
.taskbar {
    height: 70px;
    flex: none;
    display: flex;
    background: #04171c;
    color: #fff;
}

.app {
    width: 88px;
    display: flex;
    align-items: center;
    justify-content: center;
}

.app.start {
    width: 82px;
    padding-left: 2px;
}

.app.mail {
    width: 94px;
    padding-left: 3px;
    padding-right: 1px;
}

.app.open {
    width: 71px;
    margin: 0 8px;
    border-bottom: 4px solid #76b9ed;
    padding-top: 4px;
}

.app.wps {
    width: 85px;
    margin-left: 1px;
    padding-top: 4px;
    border-bottom: 4px solid #76b9ed;
    background: linear-gradient(to right, #3a484c 78px, #202c2f 78px, #202c2f 80px, #303d3e 80px);
}

.tray {
    display: flex;
    align-items: center;
    margin-left: auto;
}

.up-chevron {
    margin-left: 39px;
}

.guard {
    margin-left: 18px;
}

.battery {
    margin-left: 14px;
}

.volume {
    margin-left: 13px;
}

.ime {
    width: 24px;
    margin-left: 15px;
    font-size: 23px;
    font-weight: 400;
    text-align: center;
}

.sogou-small {
    margin-left: 23px;
}

.clock {
    width: 164px;
    padding-right: 3px;
    font-size: 21px;
    font-weight: 400;
    letter-spacing: 0.25px;
    line-height: 32px;
    text-align: center;
}

.notice {
    position: relative;
    width: 28px;
    height: 28px;
    margin-top: -3px;
}

.notice b {
    position: absolute;
    left: 12px;
    top: 12px;
    width: 29px;
    height: 29px;
    border: 1px solid #888;
    border-radius: 50%;
    background: rgba(36, 42, 46, 0.9);
    line-height: 26px;
    text-align: center;
    font-weight: 700;
}

.peek {
    width: 2px;
    height: 70px;
    margin: 0 8px 0 35px;
    background: #68757b;
}

/* Input method bar */
.ime-bar {
    position: absolute;
    left: 916px;
    top: 71px;
    z-index: 2;
    width: 339px;
    height: 46px;
    display: flex;
    align-items: center;
    padding: 2px 0 0 35px;
    border: 1px solid #aebfd0;
    background: #fdfdfe;
}

.ime-bar .logo {
    position: absolute;
    left: -24px;
    top: -4px;
}

.punct {
    margin-left: 16px;
}

.smile {
    margin-left: 11px;
}

.mic {
    margin-left: 13px;
}

.keys {
    margin-left: 13px;
}

.user {
    margin-left: 11px;
}

.shirt {
    margin-left: 7px;
}

.wrench {
    margin-left: 12px;
}

.lv {
    fill: #fff;
    font-size: 15px;
    font-weight: 700;
}

/* Green percentage ball */
.ball {
    position: absolute;
    left: 1901px;
    top: 86px;
    z-index: 2;
    width: 48px;
    height: 48px;
    border: 2px solid #e8e8e8;
    border-radius: 50%;
    background: radial-gradient(circle at 45% 25%, #7be07c, #3cc04d 60%);
    box-shadow: inset 0 0 0 1px #197a4e, 0 1px 4px rgba(0, 0, 0, 0.6);
    color: #fff;
    font-size: 13px;
    font-weight: 700;
    line-height: 44px;
}

.ball span {
    margin-left: 3px;
}
```
